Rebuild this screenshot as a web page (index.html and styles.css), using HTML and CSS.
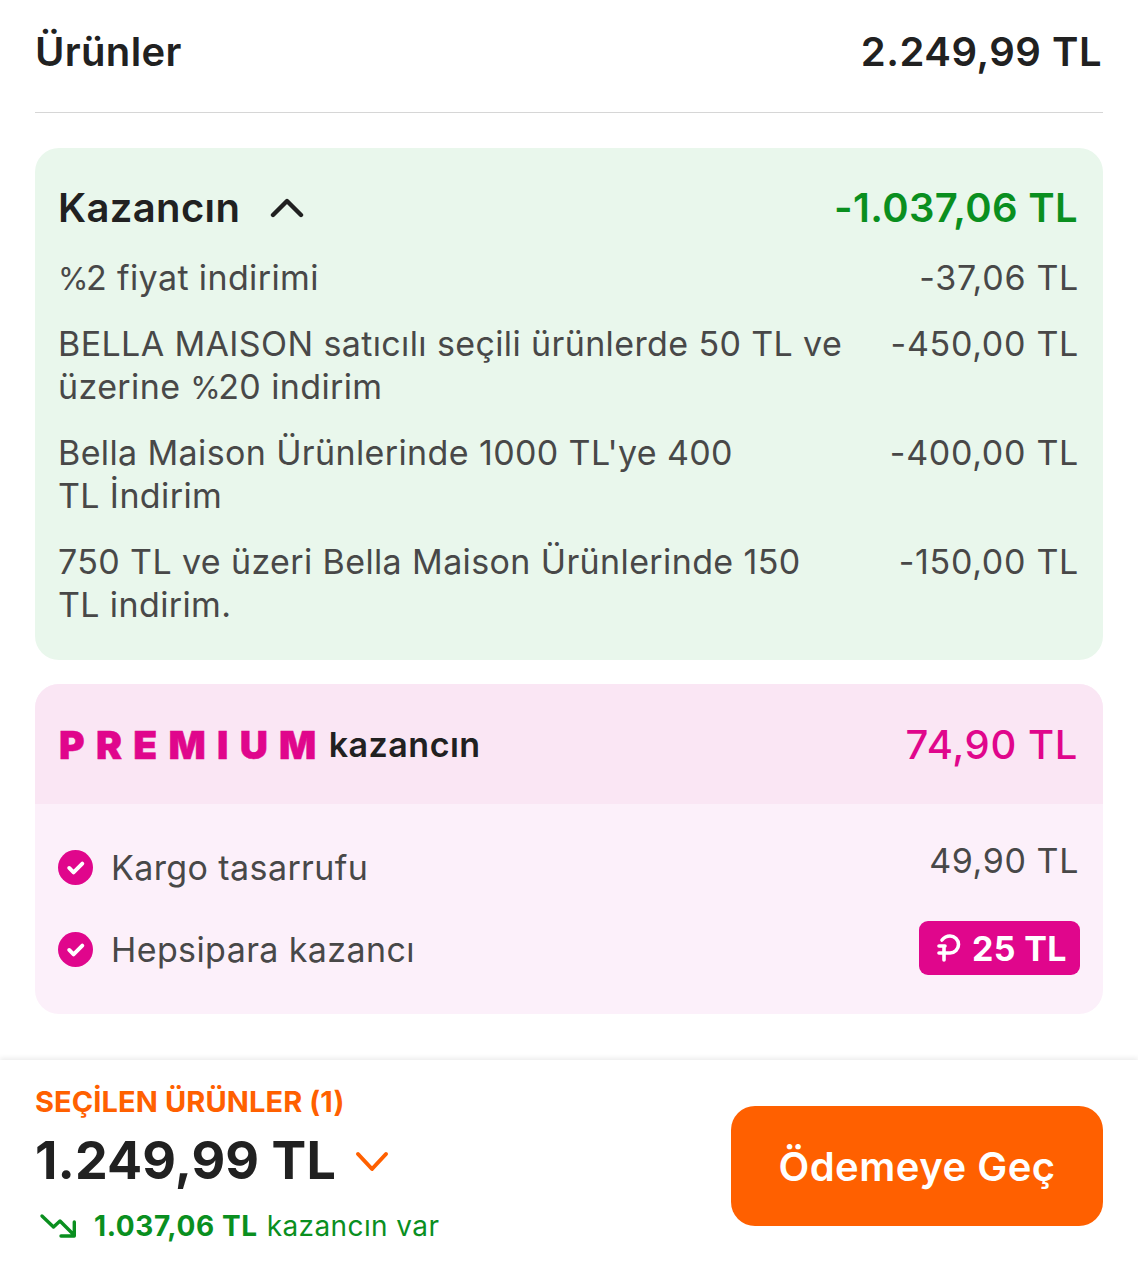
FILE: index.html
```html
<!DOCTYPE html>
<html lang="tr">
<head>
    <meta charset="UTF-8">
    <title>Sepet</title>
    <link rel="stylesheet" href="styles.css">
</head>
<body>
    <div class="summary">
        <div class="products">
            <span class="products-label">Ürünler</span>
            <span class="products-price">2.249,99 TL</span>
        </div>

        <section class="savings">
            <div class="savings-head">
                <div class="savings-title">
                    Kazancın
                    <svg class="chevron-up" width="34" height="24" viewBox="0 0 34 24"><path d="M3 20 17 6l14 14" fill="none" stroke="#212121" stroke-width="4.4" stroke-linecap="round" stroke-linejoin="round"/></svg>
                </div>
                <span class="savings-total">-1.037,06 TL</span>
            </div>
            <div class="savings-row">
                <span class="row-text"><span class="percent">%</span>2 fiyat indirimi</span>
                <span class="row-price">-37,06 TL</span>
            </div>
            <div class="savings-row">
                <span class="row-text">BELLA MAISON satıcılı seçili ürünlerde 50 TL ve<br>üzerine <span class="percent">%</span>20 indirim</span>
                <span class="row-price">-450,00 TL</span>
            </div>
            <div class="savings-row">
                <span class="row-text">Bella Maison Ürünlerinde 1000 TL'ye 400<br>TL İndirim</span>
                <span class="row-price">-400,00 TL</span>
            </div>
            <div class="savings-row">
                <span class="row-text">750 TL ve üzeri Bella Maison Ürünlerinde 150<br>TL indirim.</span>
                <span class="row-price">-150,00 TL</span>
            </div>
        </section>

        <section class="premium">
            <div class="premium-head">
                <div class="premium-title">
                    <span class="premium-logo">PREMIUM</span>
                    <span class="premium-word">kazancın</span>
                </div>
                <span class="premium-total">74,90 TL</span>
            </div>
            <div class="premium-body">
                <div class="premium-row">
                    <div class="premium-item">
                        <svg width="35" height="35" viewBox="0 0 36 36"><circle cx="18" cy="18" r="18" fill="#e0068c"/><path d="M11.5 18.5l4.5 4.5 9-9" fill="none" stroke="#fff" stroke-width="4" stroke-linecap="round" stroke-linejoin="round"/></svg>
                        <span>Kargo tasarrufu</span>
                    </div>
                    <span class="premium-price">49,90 TL</span>
                </div>
                <div class="premium-row">
                    <div class="premium-item">
                        <svg width="35" height="35" viewBox="0 0 36 36"><circle cx="18" cy="18" r="18" fill="#e0068c"/><path d="M11.5 18.5l4.5 4.5 9-9" fill="none" stroke="#fff" stroke-width="4" stroke-linecap="round" stroke-linejoin="round"/></svg>
                        <span>Hepsipara kazancı</span>
                    </div>
                    <span class="hepsipara-badge">
                        <svg width="24" height="28" viewBox="0 0 24 28"><path d="M5 6C7 3.500 10 2 13 2a8.500 8.500 0 0 1 0 17H2M2 12h6M7 12v14" fill="none" stroke="#fff" stroke-width="3.600" stroke-linecap="round" stroke-linejoin="round"/></svg>
                        25 TL
                    </span>
                </div>
            </div>
        </section>
    </div>

    <footer class="checkout">
        <div class="checkout-info">
            <div class="selected-label">SEÇİLEN ÜRÜNLER (1)</div>
            <div class="selected-price">
                1.249,99 TL
                <svg width="34" height="24" viewBox="0 0 34 24"><path d="M3 5l14 15L31 5" fill="none" stroke="#ff6000" stroke-width="4" stroke-linecap="round" stroke-linejoin="round"/></svg>
            </div>
            <div class="selected-savings">
                <svg width="38" height="26" viewBox="0 0 38 26"><path d="M3 3l11.500 11 6.500-6 14 14M35.300 9v14H22" fill="none" stroke="#0a8f1f" stroke-width="3.400" stroke-linecap="round" stroke-linejoin="round"/></svg>
                <strong>1.037,06 TL</strong> kazancın var
            </div>
        </div>
        <button class="pay-button" type="button">Ödemeye Geç</button>
    </footer>
</body>
</html>
```

FILE: styles.css
```css
* {
    box-sizing: border-box;
}

html, body {
    height: 100%;
}

body {
    margin: 0;
    height: 1280px;
    display: flex;
    flex-direction: column;
    background: #fff;
    color: #212121;
    font-family: Inter, "Liberation Sans", sans-serif;
    overflow: hidden;
}

.summary {
    flex: 1;
    padding: 0 35px;
}

.products {
    display: flex;
    justify-content: space-between;
    align-items: center;
    height: 113px;
    padding-bottom: 10px;
    border-bottom: 1px solid #d6d6d6;
    font-size: 40px;
    font-weight: 600;
    letter-spacing: 0.5px;
}

.products-label {
    letter-spacing: 0.35px;
}

.products-price {
    margin-right: 1px;
}

.savings {
    margin-top: 35px;
    padding: 35px 25px 34px 23px;
    background: #e9f7ec;
    border-radius: 24px;
}

.savings-head {
    display: flex;
    justify-content: space-between;
    align-items: center;
    height: 48px;
    margin-bottom: 25px;
    font-size: 40px;
    font-weight: 600;
    letter-spacing: 0.35px;
}

.savings-title {
    display: flex;
    align-items: center;
    gap: 30px;
}

.savings-total {
    color: #0a8f1f;
}

.savings-row {
    display: flex;
    justify-content: space-between;
    gap: 40px;
    margin-bottom: 23px;
    font-size: 34px;
    line-height: 43px;
    letter-spacing: 0.38px;
    color: #484848;
}

.savings-row:last-child {
    margin-bottom: 0;
}

.percent {
    font-size: 31px;
    line-height: 1;
    letter-spacing: -2.5px;
}

.row-price {
    flex: none;
    margin-right: -1px;
    letter-spacing: 0.7px;
}

.premium {
    margin-top: 24px;
    border-radius: 24px;
    overflow: hidden;
    background: #fcf0fa;
}

.premium-head {
    display: flex;
    justify-content: space-between;
    align-items: center;
    height: 120px;
    padding: 0 25px 0 24px;
    background: #fae6f4;
}

.premium-title {
    display: flex;
    align-items: center;
    gap: 1px;
}

.premium-logo {
    color: #e0068c;
    font-size: 39px;
    font-weight: 900;
    letter-spacing: 11.3px;
    -webkit-text-stroke: 0.5px #e0068c;
}

.premium-word {
    font-size: 34px;
    font-weight: 600;
    letter-spacing: 0.5px;
}

.premium-total {
    color: #e0068c;
    font-size: 40px;
    font-weight: 500;
    letter-spacing: 0.6px;
}

.premium-body {
    height: 210px;
    padding: 36px 24px 0 23px;
    display: flex;
    flex-direction: column;
    gap: 28px;
}

.premium-row {
    display: flex;
    justify-content: space-between;
    align-items: center;
    height: 54px;
    color: #484848;
    font-size: 34px;
    letter-spacing: 0.4px;
}

.premium-item {
    display: flex;
    align-items: center;
    gap: 18px;
}

.premium-price {
    margin-bottom: 14px;
    letter-spacing: 0.6px;
}

.hepsipara-badge {
    display: flex;
    align-items: center;
    gap: 11px;
    height: 54px;
    padding: 0 13px 0 18px;
    margin: 0 -1px 2px 0;
    background: #e0068c;
    border-radius: 9px;
    color: #fff;
    font-weight: 700;
}

.checkout {
    display: flex;
    justify-content: space-between;
    align-items: center;
    height: 220px;
    padding: 0 35px 8px;
    box-shadow: 0 -2px 5px rgba(0, 0, 0, 0.08);
}

.checkout-info {
    padding-bottom: 5px;
}

.selected-label {
    color: #ff6000;
    font-size: 29px;
    font-weight: 700;
    letter-spacing: 0.1px;
}

.selected-price {
    display: flex;
    align-items: center;
    gap: 19px;
    margin: 10px 0 17px;
    font-size: 52px;
    font-weight: 700;
    letter-spacing: 0.1px;
}

.selected-savings {
    display: flex;
    align-items: center;
    gap: 7px;
    padding-left: 4px;
    color: #0a8f1f;
    font-size: 28px;
    letter-spacing: 0.4px;
}

.selected-savings strong {
    margin: 0 2px 0 10px;
    font-weight: 700;
    letter-spacing: 0.6px;
}

.pay-button {
    width: 372px;
    height: 120px;
    border: none;
    border-radius: 24px;
    background: #ff6000;
    color: #fff;
    font-family: inherit;
    font-size: 40px;
    font-weight: 600;
    letter-spacing: 0.5px;
}
```
